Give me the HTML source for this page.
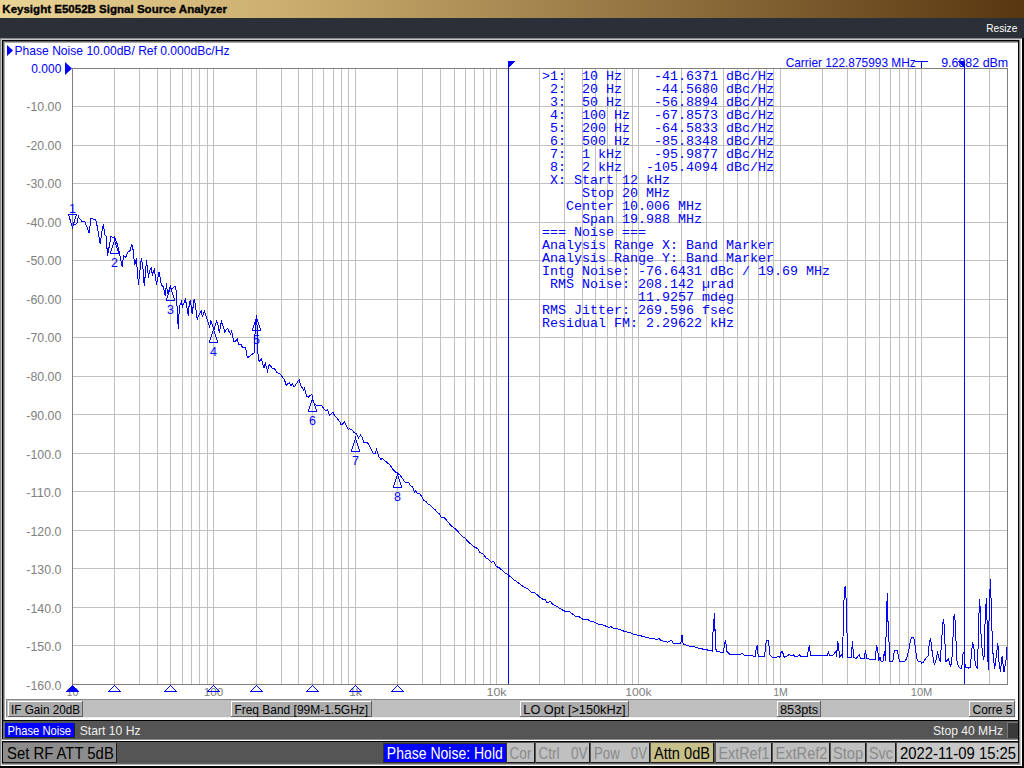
<!DOCTYPE html>
<html><head><meta charset="utf-8"><style>
html,body{margin:0;padding:0;width:1024px;height:768px;overflow:hidden;background:#000;}
svg{display:block;font-family:"Liberation Sans", sans-serif;}
</style></head><body>
<svg width="1024" height="768" viewBox="0 0 1024 768" shape-rendering="crispEdges">
<defs><linearGradient id="tg" x1="0" y1="0" x2="1" y2="0"><stop offset="0" stop-color="#ead596"/><stop offset="0.3" stop-color="#c8aa6c"/><stop offset="1" stop-color="#583610"/></linearGradient></defs>
<rect x="0" y="0" width="1024" height="18" fill="url(#tg)"/>
<text x="2.3" y="13" font-size="11.6" fill="#000" textLength="224.6" lengthAdjust="spacingAndGlyphs" font-weight="bold" stroke="#000" stroke-width="0.35" xml:space="preserve">Keysight E5052B Signal Source Analyzer</text>
<rect x="0" y="18" width="1024" height="20" fill="#2b2f38"/>
<text x="986.3" y="32" font-size="11.6" fill="#ffffff" textLength="31" lengthAdjust="spacingAndGlyphs"  xml:space="preserve">Resize</text>
<rect x="0" y="38" width="1024" height="730" fill="#000"/>
<rect x="0" y="38" width="1022" height="728" fill="#888888"/>
<rect x="1" y="39" width="1021" height="727" fill="#ffffff"/>
<rect x="1" y="39" width="1020" height="726" fill="#c8c8c8"/>
<rect x="2" y="40" width="1017" height="723" fill="#000000"/>
<rect x="3" y="41" width="1016" height="722" fill="#666666"/>
<rect x="4" y="42" width="1015" height="721" fill="#aaaaaa"/>
<rect x="5" y="43" width="1013" height="677" fill="#ffffff"/>
<rect x="1019" y="40" width="1" height="726" fill="#888888"/>
<rect x="1020" y="40" width="1" height="726" fill="#c8c8c8"/>
<rect x="1018" y="40" width="1" height="723" fill="#000000"/>
<rect x="2" y="763" width="1017" height="1" fill="#666666"/>
<rect x="2" y="764" width="1019" height="1" fill="#aaaaaa"/>
<rect x="1" y="765" width="1021" height="1" fill="#ffffff"/>
<path d="M114.5 68V684M139.5 68V684M157.5 68V684M170.5 68V684M182.5 68V684M191.5 68V684M199.5 68V684M207.5 68V684M213.5 68V684M256.5 68V684M281.5 68V684M298.5 68V684M312.5 68V684M323.5 68V684M333.5 68V684M341.5 68V684M348.5 68V684M355.5 68V684M397.5 68V684M422.5 68V684M440.5 68V684M454.5 68V684M465.5 68V684M474.5 68V684M483.5 68V684M490.5 68V684M496.5 68V684M539.5 68V684M564.5 68V684M582.5 68V684M595.5 68V684M607.5 68V684M616.5 68V684M624.5 68V684M632.5 68V684M638.5 68V684M681.5 68V684M706.5 68V684M723.5 68V684M737.5 68V684M748.5 68V684M758.5 68V684M766.5 68V684M773.5 68V684M780.5 68V684M822.5 68V684M847.5 68V684M865.5 68V684M879.5 68V684M890.5 68V684M899.5 68V684M908.5 68V684M915.5 68V684M921.5 68V684M964.5 68V684M989.5 68V684M72 106.5H1007M72 145.5H1007M72 183.5H1007M72 222.5H1007M72 260.5H1007M72 299.5H1007M72 337.5H1007M72 376.5H1007M72 414.5H1007M72 453.5H1007M72 491.5H1007M72 530.5H1007M72 568.5H1007M72 607.5H1007M72 645.5H1007" stroke="#c0c0c0" stroke-width="1" fill="none"/>
<rect x="72.5" y="68.5" width="935" height="616" stroke="#808080" stroke-width="1" fill="none"/>
<text x="61.3" y="72.5" font-size="12.5" fill="#0000ff" textLength="30" lengthAdjust="spacingAndGlyphs" text-anchor="end"  xml:space="preserve">0.000</text>
<text x="61.3" y="110.5" font-size="12.5" fill="#808080" textLength="35" lengthAdjust="spacingAndGlyphs" text-anchor="end"  xml:space="preserve">-10.00</text>
<text x="61.3" y="149.5" font-size="12.5" fill="#808080" textLength="35" lengthAdjust="spacingAndGlyphs" text-anchor="end"  xml:space="preserve">-20.00</text>
<text x="61.3" y="187.5" font-size="12.5" fill="#808080" textLength="35" lengthAdjust="spacingAndGlyphs" text-anchor="end"  xml:space="preserve">-30.00</text>
<text x="61.3" y="226.5" font-size="12.5" fill="#808080" textLength="35" lengthAdjust="spacingAndGlyphs" text-anchor="end"  xml:space="preserve">-40.00</text>
<text x="61.3" y="264.5" font-size="12.5" fill="#808080" textLength="35" lengthAdjust="spacingAndGlyphs" text-anchor="end"  xml:space="preserve">-50.00</text>
<text x="61.3" y="303.5" font-size="12.5" fill="#808080" textLength="35" lengthAdjust="spacingAndGlyphs" text-anchor="end"  xml:space="preserve">-60.00</text>
<text x="61.3" y="341.5" font-size="12.5" fill="#808080" textLength="35" lengthAdjust="spacingAndGlyphs" text-anchor="end"  xml:space="preserve">-70.00</text>
<text x="61.3" y="380.5" font-size="12.5" fill="#808080" textLength="35" lengthAdjust="spacingAndGlyphs" text-anchor="end"  xml:space="preserve">-80.00</text>
<text x="61.3" y="419.5" font-size="12.5" fill="#808080" textLength="35" lengthAdjust="spacingAndGlyphs" text-anchor="end"  xml:space="preserve">-90.00</text>
<text x="61.3" y="458.5" font-size="12.5" fill="#808080" textLength="35" lengthAdjust="spacingAndGlyphs" text-anchor="end"  xml:space="preserve">-100.0</text>
<text x="61.3" y="496.5" font-size="12.5" fill="#808080" textLength="35" lengthAdjust="spacingAndGlyphs" text-anchor="end"  xml:space="preserve">-110.0</text>
<text x="61.3" y="535.5" font-size="12.5" fill="#808080" textLength="35" lengthAdjust="spacingAndGlyphs" text-anchor="end"  xml:space="preserve">-120.0</text>
<text x="61.3" y="573.5" font-size="12.5" fill="#808080" textLength="35" lengthAdjust="spacingAndGlyphs" text-anchor="end"  xml:space="preserve">-130.0</text>
<text x="61.3" y="612.5" font-size="12.5" fill="#808080" textLength="35" lengthAdjust="spacingAndGlyphs" text-anchor="end"  xml:space="preserve">-140.0</text>
<text x="61.3" y="650.5" font-size="12.5" fill="#808080" textLength="35" lengthAdjust="spacingAndGlyphs" text-anchor="end"  xml:space="preserve">-150.0</text>
<text x="61.3" y="689.5" font-size="12.5" fill="#808080" textLength="35" lengthAdjust="spacingAndGlyphs" text-anchor="end"  xml:space="preserve">-160.0</text>
<path d="M65 62V75L72 68.5Z" fill="#0000ff" shape-rendering="auto"/>
<text x="72.5" y="695.6" font-size="11.3" fill="#808080" textLength="12" lengthAdjust="spacingAndGlyphs" text-anchor="middle"  xml:space="preserve">10</text>
<text x="213.5" y="695.6" font-size="11.3" fill="#808080" textLength="19.5" lengthAdjust="spacingAndGlyphs" text-anchor="middle"  xml:space="preserve">100</text>
<text x="355.5" y="695.6" font-size="11.3" fill="#808080" textLength="12.7" lengthAdjust="spacingAndGlyphs" text-anchor="middle"  xml:space="preserve">1k</text>
<text x="496.5" y="695.6" font-size="11.3" fill="#808080" textLength="20" lengthAdjust="spacingAndGlyphs" text-anchor="middle"  xml:space="preserve">10k</text>
<text x="638.5" y="695.6" font-size="11.3" fill="#808080" textLength="26.4" lengthAdjust="spacingAndGlyphs" text-anchor="middle"  xml:space="preserve">100k</text>
<text x="780.5" y="695.6" font-size="11.3" fill="#808080" textLength="14.6" lengthAdjust="spacingAndGlyphs" text-anchor="middle"  xml:space="preserve">1M</text>
<text x="921.5" y="695.6" font-size="11.3" fill="#808080" textLength="21.5" lengthAdjust="spacingAndGlyphs" text-anchor="middle"  xml:space="preserve">10M</text>
<path d="M508.5 61V684M964.5 61V684" stroke="#0000ff" stroke-width="1" fill="none"/>
<path d="M508 61H516L508 68Z" fill="#0000ff"/>
<path d="M965 61H957L965 68Z" fill="#0000ff"/>
<path d="M72.50,228.75 73.40,223.40 75.00,225.00 76.90,223.40 78.40,216.25 79.40,218.75 80.60,219.40 82.20,221.60 84.70,221.60 85.60,223.75 89.40,233.40 90.60,218.40 92.20,218.40 93.10,219.40 95.60,219.70 96.60,223.10 100.30,244.40 101.60,233.10 103.40,224.40 104.10,230.00 104.70,235.00 106.25,236.00 107.50,256.25 111.00,236.00 113.00,237.50 114.50,236.50 117.25,244.10 118.50,248.50 119.40,252.90 120.70,259.75 122.25,267.25 123.50,255.40 126.00,257.25 127.60,252.25 128.80,251.30 130.40,250.70 131.60,244.40 132.60,245.40 133.80,257.25 134.75,264.75 136.30,258.50 137.60,273.50 138.40,284.50 139.90,270.75 141.30,258.50 142.75,265.75 144.30,286.40 145.60,270.10 146.60,260.40 147.40,269.50 148.70,277.60 149.30,271.40 151.20,268.25 152.40,274.50 154.30,269.50 156.50,284.50 159.00,272.30 160.25,278.25 161.20,284.50 163.40,287.00 165.25,296.40 166.50,283.25 167.40,293.90 170.25,286.40 171.50,288.90 175.25,286.40 176.50,292.30 177.40,315.75 178.40,329.00 179.30,307.00 181.50,301.40 182.40,307.00 185.25,299.50 186.50,304.50 188.40,316.40 189.30,302.00 190.60,301.00 192.10,313.90 194.30,298.60 195.60,306.40 196.50,314.50 197.40,320.10 198.40,315.75 201.20,310.75 202.40,317.00 204.30,310.75 206.50,317.60 208.10,322.60 209.60,327.00 210.90,320.75 213.10,327.00 214.00,329.50 216.50,321.40 217.90,324.40 219.40,333.10 220.40,326.90 221.60,320.30 222.25,325.30 223.50,326.25 224.75,333.10 225.40,330.60 227.60,328.40 229.40,332.20 230.70,334.00 231.60,331.25 233.80,341.90 234.75,341.90 237.25,339.40 238.50,344.10 241.00,344.40 242.90,348.10 245.40,347.50 246.60,353.10 247.25,358.00 249.75,356.25 252.90,353.75 254.10,353.10 255.00,334.40 256.30,315.60 257.25,328.75 257.60,349.40 258.50,360.25 259.40,361.20 261.30,358.70 262.60,363.40 264.10,367.75 265.40,362.40 266.30,367.10 267.60,371.20 268.50,367.10 269.40,364.30 272.25,368.10 274.40,368.40 276.60,372.40 278.50,373.40 280.40,374.00 282.90,378.10 284.10,379.00 286.30,385.25 289.10,382.75 291.00,385.90 292.25,383.70 294.10,387.10 299.10,379.60 300.70,385.90 302.50,388.10 303.40,390.00 304.40,388.10 305.60,392.50 306.90,396.25 308.40,397.20 309.40,395.90 311.90,394.40 312.50,396.25 312.80,400.60 315.30,405.00 320.60,405.30 322.20,406.25 323.75,408.75 325.60,410.60 327.50,409.70 329.40,415.30 333.10,412.20 334.10,414.70 337.50,418.75 339.70,421.60 341.25,425.00 344.40,422.20 345.90,424.90 348.10,429.25 349.60,428.90 351.50,429.60 354.30,432.70 356.50,433.60 358.40,438.00 360.60,435.20 361.80,436.75 364.00,442.40 365.90,442.40 367.40,442.70 369.60,445.80 370.90,448.60 373.40,453.60 375.25,453.60 376.50,449.60 377.75,453.60 379.00,456.75 380.90,459.25 382.75,458.60 385.25,461.10 388.40,463.60 390.70,466.00 392.60,469.10 394.75,471.30 397.90,473.80 399.40,474.40 402.90,479.10 405.10,482.25 408.80,482.60 410.40,485.70 412.60,486.90 414.40,491.90 415.40,490.70 417.25,493.20 419.75,493.50 421.60,496.60 423.80,500.40 426.00,501.60 427.90,503.80 429.60,504.80 435.40,510.00 436.90,512.10 439.50,514.10 441.10,517.30 444.20,517.60 446.30,519.90 451.00,525.60 455.20,528.70 462.50,536.50 465.10,538.10 468.70,542.30 474.40,547.00 477.60,548.50 479.60,552.20 483.30,554.25 485.90,557.90 488.00,559.10 491.20,562.30 493.50,561.40 496.20,566.40 499.80,568.20 505.30,573.20 508.00,574.60 514.40,580.10 519.00,583.30 524.40,587.40 527.20,588.30 531.30,592.40 534.50,592.40 539.50,596.90 542.70,599.20 545.40,599.70 547.20,602.80 550.40,601.50 553.10,604.70 555.40,605.60 562.70,610.10 566.00,611.70 569.50,611.50 571.90,613.50 575.40,616.40 578.90,616.60 583.00,619.30 587.70,619.30 590.60,621.70 593.50,621.70 598.80,624.60 602.30,624.60 608.80,627.50 611.10,626.70 614.00,628.40 617.60,628.70 624.60,631.40 630.50,632.80 634.00,634.60 638.70,635.20 644.50,636.90 650.40,638.40 657.40,639.30 659.00,638.50 660.90,640.40 668.00,642.20 671.50,640.40 673.20,643.10 680.80,643.40 682.00,635.20 683.20,644.50 686.00,645.10 690.00,646.50 695.00,647.00 700.00,648.50 705.00,649.50 712.50,651.00 713.00,632.50 714.50,613.00 714.50,630.50 715.50,630.00 715.80,649.00 716.50,651.00 720.00,652.00 723.50,652.50 724.20,646.00 725.50,640.20 726.30,646.00 727.00,651.50 730.00,654.50 734.00,655.00 738.00,654.50 740.00,654.70 742.30,653.40 744.20,655.50 752.80,655.50 753.50,656.50 755.40,656.25 756.10,648.70 757.40,645.30 758.20,656.25 764.50,656.25 765.50,648.40 766.30,640.60 768.40,640.60 769.20,647.40 769.70,654.70 771.80,656.50 772.80,657.60 776.50,657.60 777.50,656.25 778.80,656.25 779.80,657.60 781.10,652.10 782.40,651.60 784.30,657.30 786.40,656.25 788.00,655.30 789.50,654.60 791.50,655.90 793.30,654.70 795.00,656.50 796.80,657.00 799.10,654.70 800.80,656.50 802.70,657.00 807.30,656.50 808.50,649.40 809.50,645.30 810.50,655.90 827.30,655.90 828.40,651.20 829.60,655.90 832.50,655.90 834.90,652.40 836.10,651.20 836.70,657.00 837.50,641.20 838.40,645.30 839.60,657.00 841.30,654.70 842.50,657.00 843.30,625.40 844.30,589.10 845.40,586.10 846.30,604.30 847.20,640.00 847.80,657.00 850.10,657.00 851.30,657.00 851.90,649.20 852.40,641.50 853.00,649.20 853.50,657.00 856.30,658.60 859.10,654.80 860.70,658.10 864.10,658.60 865.50,650.30 866.80,658.60 870.10,659.20 875.10,659.20 876.60,645.40 877.90,651.40 878.50,660.90 880.10,657.00 881.20,661.40 882.90,661.40 884.50,651.40 885.70,661.40 886.20,623.20 887.30,593.30 887.90,621.50 888.50,621.50 889.50,661.40 892.80,661.40 894.50,650.30 897.30,650.90 899.50,661.40 904.50,661.40 906.50,658.70 907.50,654.70 908.90,649.90 910.40,641.00 911.90,637.10 913.80,637.60 915.30,646.90 916.75,658.65 918.20,661.10 920.70,661.10 921.60,663.50 923.60,662.10 925.55,658.65 928.00,656.20 929.50,641.00 930.60,638.10 931.90,649.90 934.30,664.50 936.30,659.60 937.50,651.30 938.75,657.70 940.20,661.60 941.70,640.10 942.70,624.40 943.60,619.10 944.60,631.30 945.60,661.60 947.10,660.60 948.50,658.70 950.50,667.40 951.90,659.60 952.90,640.10 953.90,616.60 954.70,614.20 955.40,626.40 956.80,659.60 958.30,666.50 960.70,668.90 961.70,668.90 963.20,651.70 964.00,654.00 965.30,667.40 968.20,668.10 970.30,667.40 972.50,642.30 973.90,647.40 975.30,664.60 977.50,668.90 978.90,615.80 979.60,599.40 980.40,612.30 981.10,637.30 982.50,653.10 983.90,660.30 985.40,611.50 986.50,597.90 987.20,627.30 988.20,670.30 989.20,610.10 990.40,579.30 991.50,612.30 992.50,648.80 994.70,668.90 996.80,651.70 997.80,643.10 999.00,661.70 1000.40,671.70 1002.10,656.00 1004.00,671.70 1005.90,661.70 1007.00,647.40" stroke="#0000ff" stroke-width="1" fill="none" stroke-linejoin="miter" shape-rendering="crispEdges"/>
<text x="72.5" y="212.5" font-size="12.5" fill="#0000ff" text-anchor="middle"  xml:space="preserve">1</text>
<text x="114.5" y="266.5" font-size="12.5" fill="#0000ff" text-anchor="middle"  xml:space="preserve">2</text>
<text x="170.5" y="313.5" font-size="12.5" fill="#0000ff" text-anchor="middle"  xml:space="preserve">3</text>
<text x="213.5" y="355.5" font-size="12.5" fill="#0000ff" text-anchor="middle"  xml:space="preserve">4</text>
<text x="256.5" y="343.5" font-size="12.5" fill="#0000ff" text-anchor="middle"  xml:space="preserve">5</text>
<text x="312.5" y="424.5" font-size="12.5" fill="#0000ff" text-anchor="middle"  xml:space="preserve">6</text>
<text x="355.5" y="464.5" font-size="12.5" fill="#0000ff" text-anchor="middle"  xml:space="preserve">7</text>
<text x="397.5" y="500.5" font-size="12.5" fill="#0000ff" text-anchor="middle"  xml:space="preserve">8</text>
<path d="M68.5,214.5H76.5L72.5,227.5ZM114.5,240.0L118.7,253.5H110.3ZM170.5,287.0L174.7,300.5H166.3ZM213.5,329.0L217.7,342.5H209.3ZM256.5,317.0L260.7,330.5H252.3ZM312.5,398.0L316.7,411.5H308.3ZM355.5,438.0L359.7,451.5H351.3ZM397.5,474.0L401.7,487.5H393.3Z" stroke="#0000ff" stroke-width="1" fill="none" stroke-linejoin="miter"/>
<path d="M72.5,685.5L78.5,691.5H66.5Z" fill="#0000ff" stroke="#0000ff" stroke-width="1"/>
<path d="M114.5,685.5L120.5,691.5H108.5ZM170.5,685.5L176.5,691.5H164.5ZM213.5,685.5L219.5,691.5H207.5ZM256.5,685.5L262.5,691.5H250.5ZM312.5,685.5L318.5,691.5H306.5ZM355.5,685.5L361.5,691.5H349.5ZM397.5,685.5L403.5,691.5H391.5Z" fill="none" stroke="#0000ff" stroke-width="1"/>
<text x="542" y="80" font-size="13.33" fill="#0000ff" font-family='"Liberation Mono", monospace'  xml:space="preserve">&gt;1:  10 Hz    -41.6371 dBc/Hz</text>
<text x="542" y="93" font-size="13.33" fill="#0000ff" font-family='"Liberation Mono", monospace'  xml:space="preserve"> 2:  20 Hz    -44.5680 dBc/Hz</text>
<text x="542" y="106" font-size="13.33" fill="#0000ff" font-family='"Liberation Mono", monospace'  xml:space="preserve"> 3:  50 Hz    -56.8894 dBc/Hz</text>
<text x="542" y="119" font-size="13.33" fill="#0000ff" font-family='"Liberation Mono", monospace'  xml:space="preserve"> 4:  100 Hz   -67.8573 dBc/Hz</text>
<text x="542" y="132" font-size="13.33" fill="#0000ff" font-family='"Liberation Mono", monospace'  xml:space="preserve"> 5:  200 Hz   -64.5833 dBc/Hz</text>
<text x="542" y="145" font-size="13.33" fill="#0000ff" font-family='"Liberation Mono", monospace'  xml:space="preserve"> 6:  500 Hz   -85.8348 dBc/Hz</text>
<text x="542" y="158" font-size="13.33" fill="#0000ff" font-family='"Liberation Mono", monospace'  xml:space="preserve"> 7:  1 kHz    -95.9877 dBc/Hz</text>
<text x="542" y="171" font-size="13.33" fill="#0000ff" font-family='"Liberation Mono", monospace'  xml:space="preserve"> 8:  2 kHz   -105.4094 dBc/Hz</text>
<text x="542" y="184" font-size="13.33" fill="#0000ff" font-family='"Liberation Mono", monospace'  xml:space="preserve"> X: Start 12 kHz</text>
<text x="542" y="197" font-size="13.33" fill="#0000ff" font-family='"Liberation Mono", monospace'  xml:space="preserve">     Stop 20 MHz</text>
<text x="542" y="210" font-size="13.33" fill="#0000ff" font-family='"Liberation Mono", monospace'  xml:space="preserve">   Center 10.006 MHz</text>
<text x="542" y="223" font-size="13.33" fill="#0000ff" font-family='"Liberation Mono", monospace'  xml:space="preserve">     Span 19.988 MHz</text>
<text x="542" y="236" font-size="13.33" fill="#0000ff" font-family='"Liberation Mono", monospace'  xml:space="preserve">=== Noise ===</text>
<text x="542" y="249" font-size="13.33" fill="#0000ff" font-family='"Liberation Mono", monospace'  xml:space="preserve">Analysis Range X: Band Marker</text>
<text x="542" y="262" font-size="13.33" fill="#0000ff" font-family='"Liberation Mono", monospace'  xml:space="preserve">Analysis Range Y: Band Marker</text>
<text x="542" y="275" font-size="13.33" fill="#0000ff" font-family='"Liberation Mono", monospace'  xml:space="preserve">Intg Noise: -76.6431 dBc / 19.69 MHz</text>
<text x="542" y="288" font-size="13.33" fill="#0000ff" font-family='"Liberation Mono", monospace'  xml:space="preserve"> RMS Noise: 208.142 µrad</text>
<text x="542" y="301" font-size="13.33" fill="#0000ff" font-family='"Liberation Mono", monospace'  xml:space="preserve">            11.9257 mdeg</text>
<text x="542" y="314" font-size="13.33" fill="#0000ff" font-family='"Liberation Mono", monospace'  xml:space="preserve">RMS Jitter: 269.596 fsec</text>
<text x="542" y="327" font-size="13.33" fill="#0000ff" font-family='"Liberation Mono", monospace'  xml:space="preserve">Residual FM: 2.29622 kHz</text>
<path d="M7 45V56L13 50.5Z" fill="#0000ff" shape-rendering="auto"/>
<text x="14.5" y="54.8" font-size="13.2" fill="#0000ff" textLength="215" lengthAdjust="spacingAndGlyphs"  xml:space="preserve">Phase Noise 10.00dB/ Ref 0.000dBc/Hz</text>
<text x="785.7" y="67" font-size="13.2" fill="#0000ff" textLength="130" lengthAdjust="spacingAndGlyphs"  xml:space="preserve">Carrier 122.875993 MHz</text>
<path d="M915 61.5H928M921.5 61V68" stroke="#0000ff" stroke-width="1" fill="none"/>
<text x="941.2" y="66.8" font-size="13.2" fill="#0000ff" textLength="67" lengthAdjust="spacingAndGlyphs"  xml:space="preserve">9.6882 dBm</text>
<rect x="6" y="699" width="1010" height="19" fill="#f0f0f0"/>
<rect x="6" y="699" width="1009" height="18" fill="#888888"/>
<rect x="7" y="700" width="1008" height="17" fill="#bebebe"/>
<rect x="8" y="701" width="75" height="16" fill="#606060"/>
<rect x="8" y="701" width="74" height="15" fill="#ffffff"/>
<rect x="9" y="702" width="73" height="14" fill="#acacac"/>
<text x="11" y="714" font-size="13" fill="#000000" textLength="69" lengthAdjust="spacingAndGlyphs"  xml:space="preserve">IF Gain 20dB</text>
<rect x="231" y="701" width="141" height="16" fill="#606060"/>
<rect x="231" y="701" width="140" height="15" fill="#ffffff"/>
<rect x="232" y="702" width="139" height="14" fill="#acacac"/>
<text x="234.4" y="714" font-size="13" fill="#000000" textLength="133.7" lengthAdjust="spacingAndGlyphs"  xml:space="preserve">Freq Band [99M-1.5GHz]</text>
<rect x="520" y="701" width="109" height="16" fill="#606060"/>
<rect x="520" y="701" width="108" height="15" fill="#ffffff"/>
<rect x="521" y="702" width="107" height="14" fill="#acacac"/>
<text x="523.3" y="714" font-size="13" fill="#000000" textLength="102.3" lengthAdjust="spacingAndGlyphs"  xml:space="preserve">LO Opt [&gt;150kHz]</text>
<rect x="777" y="701" width="44" height="16" fill="#606060"/>
<rect x="777" y="701" width="43" height="15" fill="#ffffff"/>
<rect x="778" y="702" width="42" height="14" fill="#acacac"/>
<text x="780" y="714" font-size="13" fill="#000000" textLength="38.2" lengthAdjust="spacingAndGlyphs"  xml:space="preserve">853pts</text>
<rect x="969" y="701" width="46" height="16" fill="#606060"/>
<rect x="969" y="701" width="45" height="15" fill="#ffffff"/>
<rect x="970" y="702" width="44" height="14" fill="#acacac"/>
<text x="972.5" y="714" font-size="13" fill="#000000" textLength="40" lengthAdjust="spacingAndGlyphs"  xml:space="preserve">Corre 5</text>
<rect x="2" y="720" width="1016" height="19" fill="#555555"/>
<rect x="2" y="720" width="1" height="19" fill="#000000"/>
<rect x="3" y="721" width="2" height="18" fill="#6a6a6a"/>
<rect x="2" y="720" width="1016" height="1" fill="#000000"/>
<rect x="5" y="723" width="70" height="15" fill="#202020"/>
<rect x="5" y="723" width="69" height="14" fill="#0000ff"/>
<text x="7.5" y="734.8" font-size="13" fill="#ffffff" textLength="63.6" lengthAdjust="spacingAndGlyphs"  xml:space="preserve">Phase Noise</text>
<text x="79.7" y="734.8" font-size="13" fill="#f0f0f0" textLength="60.9" lengthAdjust="spacingAndGlyphs"  xml:space="preserve">Start 10 Hz</text>
<text x="933" y="734.8" font-size="13" fill="#f0f0f0" textLength="70" lengthAdjust="spacingAndGlyphs"  xml:space="preserve">Stop 40 MHz</text>
<rect x="1007" y="722" width="11" height="16" fill="#777777"/>
<rect x="1008" y="723" width="10" height="15" fill="#3a3a3a"/>
<rect x="2" y="739" width="1016" height="1" fill="#888888"/>
<rect x="2" y="740" width="1016" height="1" fill="#ffffff"/>
<rect x="2" y="741" width="1016" height="1" fill="#000000"/>
<rect x="3" y="742" width="1015" height="21" fill="#555555"/>
<rect x="3" y="743" width="114" height="20" fill="#1a1a1a"/>
<rect x="3" y="743" width="113" height="19" fill="#8c8c8c"/>
<text x="7" y="758.7" font-size="16.2" fill="#000000" textLength="106.8" lengthAdjust="spacingAndGlyphs"  xml:space="preserve">Set RF ATT 5dB</text>
<rect x="383" y="743" width="124" height="20" fill="#303030"/>
<rect x="384" y="744" width="122" height="18" fill="#0000ff"/>
<text x="386.8" y="758.7" font-size="16.2" fill="#ffffff" textLength="116" lengthAdjust="spacingAndGlyphs"  xml:space="preserve">Phase Noise: Hold</text>
<rect x="507" y="743" width="28" height="20" fill="#1a1a1a"/>
<rect x="507" y="743" width="27" height="19" fill="#c0c0c0"/>
<text x="509.5" y="758.7" font-size="16.2" fill="#8a8a8a" textLength="22" lengthAdjust="spacingAndGlyphs"  xml:space="preserve">Cor</text>
<rect x="536" y="743" width="54" height="20" fill="#1a1a1a"/>
<rect x="536" y="743" width="53" height="19" fill="#c0c0c0"/>
<text x="538.5" y="758.7" font-size="16.2" fill="#8a8a8a" textLength="49" lengthAdjust="spacingAndGlyphs"  xml:space="preserve">Ctrl   0V</text>
<rect x="591" y="743" width="59" height="20" fill="#1a1a1a"/>
<rect x="591" y="743" width="58" height="19" fill="#c0c0c0"/>
<text x="594" y="758.7" font-size="16.2" fill="#8a8a8a" textLength="53" lengthAdjust="spacingAndGlyphs"  xml:space="preserve">Pow   0V</text>
<rect x="716" y="743" width="56" height="20" fill="#1a1a1a"/>
<rect x="716" y="743" width="55" height="19" fill="#c0c0c0"/>
<text x="718.5" y="758.7" font-size="16.2" fill="#8a8a8a" textLength="51" lengthAdjust="spacingAndGlyphs"  xml:space="preserve">ExtRef1</text>
<rect x="773" y="743" width="57" height="20" fill="#1a1a1a"/>
<rect x="773" y="743" width="56" height="19" fill="#c0c0c0"/>
<text x="775.5" y="758.7" font-size="16.2" fill="#8a8a8a" textLength="52" lengthAdjust="spacingAndGlyphs"  xml:space="preserve">ExtRef2</text>
<rect x="831" y="743" width="35" height="20" fill="#1a1a1a"/>
<rect x="831" y="743" width="34" height="19" fill="#c0c0c0"/>
<text x="833" y="758.7" font-size="16.2" fill="#8a8a8a" textLength="30" lengthAdjust="spacingAndGlyphs"  xml:space="preserve">Stop</text>
<rect x="867" y="743" width="29" height="20" fill="#1a1a1a"/>
<rect x="867" y="743" width="28" height="19" fill="#c0c0c0"/>
<text x="869" y="758.7" font-size="16.2" fill="#8a8a8a" textLength="24" lengthAdjust="spacingAndGlyphs"  xml:space="preserve">Svc</text>
<rect x="651" y="743" width="63" height="20" fill="#1a1a1a"/>
<rect x="651" y="743" width="62" height="19" fill="#c8c08a"/>
<text x="654" y="758.7" font-size="16.2" fill="#000000" textLength="56" lengthAdjust="spacingAndGlyphs"  xml:space="preserve">Attn 0dB</text>
<rect x="897" y="743" width="122" height="20" fill="#1a1a1a"/>
<rect x="897" y="743" width="121" height="19" fill="#c8c8c8"/>
<text x="900" y="758.7" font-size="16.2" fill="#000000" textLength="116" lengthAdjust="spacingAndGlyphs"  xml:space="preserve">2022-11-09 15:25</text>
</svg></body></html>
